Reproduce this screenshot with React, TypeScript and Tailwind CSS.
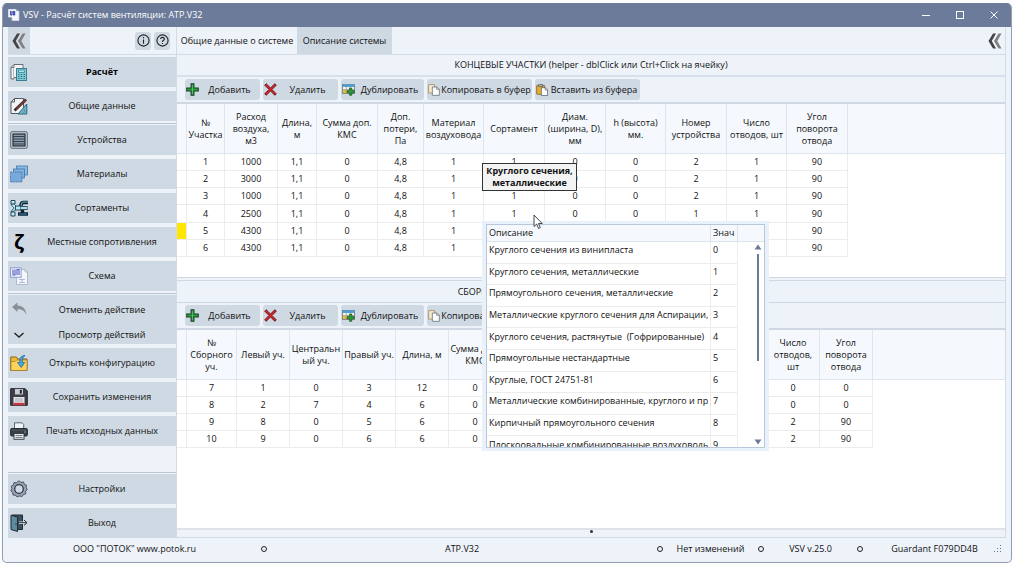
import type { ReactNode } from "react";
import clsx from "clsx";

const Svg = ({ size = "size-[18px]", children }: { size?: string; children: ReactNode }) => (
    <svg viewBox="0 0 18 18" className={clsx(size, "shrink-0")} fill="none" aria-hidden="true">
        {children}
    </svg>
);

const Chevrons = () => (
    <svg viewBox="0 0 14 16" className="h-4 w-[14px]" aria-hidden="true">
        <path d="M5 0.5H8L3.8 8 8 15.5H5L0.5 8z" fill="#444" />
        <path d="M10.5 0.5H13.5L9.3 8 13.5 15.5H10.5L6 8z" fill="#808080" />
    </svg>
);

const CalcIcon = () => (
    <Svg>
        <path d="M1 16V4.500L4 1.500H13V14.500H4V16z" stroke="#5b6068" fill="#f2f4f6" strokeWidth=".9" />
        <path d="M3.500 14V4.500" stroke="#9aa1a8" strokeWidth=".7" />
        <path d="M1 4.500H4V1.500" stroke="#5b6068" strokeWidth=".8" />
        <rect x="6.500" y="5.500" width="10" height="12" fill="#7fcbd6" stroke="#3a7f8e" />
        <rect x="8.500" y="7" width="6" height="2.300" fill="#a9e0e6" stroke="#2f7080" strokeWidth=".6" />
        <path d="M8 11.500h1.500M10.700 11.500h1.500M13.500 11.500H15M8 13.500h1.500M10.700 13.500h1.500M13.500 13.500H15M8 15.500h1.500M10.700 15.500h1.500M13.500 15.500H15" stroke="#2b6472" strokeWidth=".9" />
    </Svg>
);

const DraftIcon = () => (
    <Svg>
        <path d="M4.500 1.500H13.500V16.500H1V5z" fill="#f2f5f7" stroke="#55585c" />
        <path d="M1 5h3.500V1.500" stroke="#55585c" />
        <path d="M16.800 7v10H8z" fill="#6fb9cc" stroke="#2a6478" />
        <path d="M14.500 12.500v2.500h-2.200z" fill="#d9ebf4" stroke="#2a5d7c" strokeWidth=".5" />
        <path d="M4.500 13.500 16 2.500" stroke="#3c2424" strokeWidth="2.800" />
        <path d="M6 12.200 15.500 3" stroke="#8f4038" strokeWidth="1.100" />
    </Svg>
);

const GrilleIcon = () => (
    <Svg>
        <rect x=".8" y=".8" width="16.400" height="16.400" rx="1" fill="#dfe5ec" stroke="#4d5763" />
        <rect x="3" y="3" width="12" height="12" fill="#8c9bac" stroke="#1e2833" strokeWidth="1.200" />
        <path d="M3 5.500h12M3 8h12M3 10.500h12M3 13h12" stroke="#33414f" strokeWidth="1.100" />
    </Svg>
);

const LayersIcon = () => (
    <Svg>
        <rect x="6.500" y="1" width="11" height="9" fill="#8db8e2" stroke="#3f76ad" strokeWidth=".8" />
        <rect x="3.500" y="4" width="11" height="9" fill="#84b1df" stroke="#3f76ad" strokeWidth=".8" />
        <rect x=".5" y="7" width="11.500" height="10" fill="#79a8da" stroke="#3a6ea6" strokeWidth=".8" strokeDasharray="1.500 .7" />
    </Svg>
);

const PipesIcon = () => (
    <Svg>
        <path d="M1 1.500h4v3.500H1zM1 13h4v4H1z" fill="#c4e9f3" stroke="#22495c" />
        <path d="M1 5.500 4 9 1 12.500 3 12.500 7 9.500V8L4 5z" fill="#c4e9f3" stroke="#22495c" strokeWidth=".8" />
        <rect x="5.500" y="7" width="5" height="4" fill="#b5e8f2" stroke="#22495c" />
        <path d="M18 3.500H13.500Q11 3.500 11 7" stroke="#14222c" strokeWidth="3.600" />
        <path d="M18 3.200H13.500Q11.300 3.200 11.300 7" stroke="#4f97ab" strokeWidth="1.300" />
        <path d="M10.500 9H17.500" stroke="#14222c" strokeWidth="4" />
        <path d="M10.500 9H17" stroke="#a3e0ee" strokeWidth="2.400" />
        <path d="M12.500 11v2.500M8 15h10" stroke="#14222c" strokeWidth="3.400" />
        <path d="M9 15h8" stroke="#1f6d9e" strokeWidth="1.300" />
    </Svg>
);

const ZetaIcon = () => (
    <span aria-hidden="true" className="w-[18px] shrink-0 text-center font-['Open_Sans','Noto_Sans',sans-serif] text-[20px] leading-5 font-bold text-black">
        ζ
    </span>
);

const SchemeIcon = () => (
    <Svg>
        <path d="M6.500 2.500h8.500l2.500 2.500v12.500h-11z" fill="#f4f6fb" stroke="#a8aebc" strokeWidth=".8" />
        <path d="M15 2.500V5h2.500" stroke="#a8aebc" strokeWidth=".8" />
        <path d="M9 15.500h6M12 11.500v4M9 12.500h6" stroke="#aebbe0" />
        <rect x=".6" y=".8" width="10.500" height="9.500" fill="#eef1fc" stroke="#8794d0" strokeWidth=".9" />
        <path d="M3 2.500v5.500h2v-5.500M7 8V2.500h2V8" stroke="#5563bd" strokeWidth="1.100" />
    </Svg>
);

const UndoIcon = () => (
    <Svg>
        <path d="M2 6 7.500 1.500V4.500C12.500 4.500 16 8 16.500 14 14.500 9.500 11.500 8 7.500 8.200V11z" fill="#8a9097" />
    </Svg>
);

const DownIcon = () => (
    <Svg>
        <path d="M4.500 7 9 11 13.500 7" stroke="#222" strokeWidth="1.400" />
    </Svg>
);

const FolderIcon = () => (
    <Svg>
        <path d="M.8 16.500V3h5.500l1.500 2H17v11.500z" fill="#f2bb3b" stroke="#7d5a12" strokeWidth=".9" />
        <path d="M1 7.500h4L6.500 6H17v10.500H1z" fill="#fbd35c" stroke="#a47a1b" strokeWidth=".7" />
        <path d="M15 1.500C11 1.500 9.500 4 9.800 8.500H7.500L11.200 13.500 14.700 8.500H12.400C12.200 5 12.800 3 15 1.500z" fill="#4aa6e0" stroke="#1d5e8c" strokeWidth=".7" />
    </Svg>
);

const FloppyIcon = () => (
    <Svg>
        <path d="M.7 .7H15.200L17.300 3V17.300H.7z" fill="#3f3d45" stroke="#24232a" />
        <rect x="5" y="1" width="8" height="5.500" fill="#c8ccd2" />
        <rect x="9.800" y="1.800" width="2" height="3.800" fill="#23252b" />
        <rect x="3.500" y="9" width="11" height="8" fill="#e2e5e9" />
        <rect x="3.500" y="14.800" width="11" height="2.500" fill="#c63844" />
        <path d="M5 11h8M5 13h8" stroke="#8b919a" strokeWidth=".7" />
    </Svg>
);

const PrinterIcon = () => (
    <Svg>
        <path d="M4.500 7V.8h7.500l1.700 1.700V7z" fill="#f2f5f7" stroke="#4d565e" strokeWidth=".9" />
        <rect x=".6" y="6.500" width="16.800" height="7.500" rx="1.200" fill="#3a4047" stroke="#1f2327" strokeWidth=".9" />
        <path d="M1.500 8h15" stroke="#59626b" strokeWidth=".7" />
        <circle cx="15" cy="10" r=".8" fill="#67c0dd" />
        <rect x="4" y="11.500" width="10" height="5.800" fill="#e4e9ed" stroke="#343a40" strokeWidth=".9" />
        <path d="M5.500 13.500h7M5.500 15.500h7" stroke="#59636d" strokeWidth=".8" />
    </Svg>
);

const GearIcon = () => (
    <Svg>
        <path
            d="M9 .8 11 2.500 13.500 1.900 14.300 4.300 16.600 5.300 16.100 7.700 17.300 9.500 15.600 11.300 15.800 13.800 13.400 14.500 12 16.600 9.600 15.900 7.200 17 5.500 15.200 3 15 2.700 12.500 .8 10.900 1.900 8.600 1.200 6.200 3.400 5 4 2.600 6.500 2.700z"
            fill="#99a2b2"
            stroke="#4a5162"
        />
        <circle cx="9" cy="9" r="4.300" fill="#cfd9e4" stroke="#31384a" strokeWidth="1.300" />
    </Svg>
);

const DoorIcon = () => (
    <Svg>
        <path d="M2 1h10.500v14.500H6" fill="#3d4f5c" stroke="#1e2a33" />
        <path d="M1 1.200 7.500 3V17.500L1 15.500z" fill="#5f8ba0" stroke="#1e2a33" />
        <circle cx="6" cy="10" r=".7" fill="#1e2a33" />
        <path d="M9 8.700h7" stroke="#dfe6ea" strokeWidth="2.600" />
        <path d="M9 8.700h7.500M14 6l3 2.700-3 2.700" stroke="#1e2a33" />
    </Svg>
);

const PlusIcon = () => (
    <Svg size="size-[13px]">
        <path d="M7 1h4v6h6v4h-6v6H7v-6H1V7h6z" fill="#27a243" stroke="#1c3a24" strokeWidth="1.400" />
        <path d="M9 3v12" stroke="#63c878" />
    </Svg>
);

const CrossIcon = () => (
    <Svg size="size-[13px]">
        <path d="M3 1 9 7 15 1 17 3 11 9 17 15 15 17 9 11 3 17 1 15 7 9 1 3z" fill="#e0262c" stroke="#571014" strokeWidth="1.300" />
    </Svg>
);

const DuplicateIcon = () => (
    <Svg size="size-[13px]">
        <rect x=".7" y="2" width="16.600" height="12.500" fill="#f7f4e4" stroke="#6d7c88" strokeWidth="1.200" />
        <rect x="1" y="2" width="16" height="3.500" fill="#4f9fd8" />
        <path d="M1 9h16M1 12h16M6 5.500v9M11.500 5.500v9" stroke="#8a9aa5" />
        <rect x="1.500" y="9.500" width="6" height="4.500" fill="#e5b53f" />
        <path d="M10.500 7h3v3.500H17v3h-3.500V17h-3v-3.500H7v-3h3.500z" fill="#2c9e35" stroke="#1b5321" />
    </Svg>
);

const CopyIcon = () => (
    <Svg size="size-3">
        <rect x="1" y="1" width="9" height="12.500" fill="#f4e8cd" stroke="#a58e60" strokeWidth="1.200" />
        <path d="M6.500 4.500H13L17 8V17H6.500z" fill="#fbfbfb" stroke="#667077" strokeWidth="1.200" />
        <path d="M13 4.500V8h4" stroke="#667077" />
    </Svg>
);

const PasteIcon = () => (
    <Svg size="size-3">
        <rect x="1" y="2" width="12" height="13.500" rx="1" fill="#e8ad2e" stroke="#80601c" strokeWidth="1.200" />
        <rect x="4" y="1" width="6" height="3" fill="#a6adb3" stroke="#59626a" />
        <path d="M8 5.500H14L17.300 9V17.300H8z" fill="#fcfcfc" stroke="#5b6770" strokeWidth="1.200" />
        <path d="M13.800 5.500V9h3.500" stroke="#5b6770" />
    </Svg>
);

const AppIcon = () => (
    <Svg size="size-3">
        <path d="M6 3h10.500v14.500H6z" fill="#f3f5fb" stroke="#c9d2ea" />
        <rect x="1" y="1" width="11" height="11" fill="#e8ecfb" stroke="#fff" />
        <path d="M4 3v6h2V3M8 3v6h2V3" stroke="#2b3ca6" strokeWidth="1.500" />
    </Svg>
);

type Item = { label: string; icon: () => ReactNode; bold?: boolean; short?: boolean };

const groups: Item[][] = [
    [
        { label: "Расчёт", icon: CalcIcon, bold: true },
        { label: "Общие данные", icon: DraftIcon },
    ],
    [
        { label: "Устройства", icon: GrilleIcon },
        { label: "Материалы", icon: LayersIcon },
        { label: "Сортаменты", icon: PipesIcon },
        { label: "Местные сопротивления", icon: ZetaIcon },
        { label: "Схема", icon: SchemeIcon },
    ],
];

const fileItems: Item[] = [
    { label: "Открыть конфигурацию", icon: FolderIcon },
    { label: "Сохранить изменения", icon: FloppyIcon },
    { label: "Печать исходных данных", icon: PrinterIcon },
];

const appItems: Item[] = [
    { label: "Настройки", icon: GearIcon },
    { label: "Выход", icon: DoorIcon },
];

const SideButton = ({ label, icon: Icon, bold, short }: Item) => (
    <button className={clsx("flex w-full items-center bg-[#cfd9e3] pl-[2px]", short ? "h-[19px]" : "h-[30px]", bold && "font-bold text-black")}>
        <Icon />
        <span className="flex-1 text-center">{label}</span>
    </button>
);

const Separator = () => (
    <div className="flex h-1 items-center">
        <div className="h-px w-full bg-[#bcc5cf]" />
    </div>
);

const Toolbar = () => (
    <div className="flex h-[27px] gap-[3px] border-b-2 border-[#d0d9e3] py-[2px] pl-2">
        {[
            { label: "Добавить", icon: PlusIcon, width: "w-[75px]" },
            { label: "Удалить", icon: CrossIcon, width: "w-[75px]" },
            { label: "Дублировать", icon: DuplicateIcon, width: "w-[83px]" },
            { label: "Копировать в буфер", icon: CopyIcon, width: "w-[105px]" },
            { label: "Вставить из буфера", icon: PasteIcon, width: "w-[105px]" },
        ].map(({ label, icon: Icon, width }) => (
            <button key={label} className={clsx("flex items-center rounded-[3px] bg-[#cfd9e3] pl-px whitespace-nowrap", width)}>
                <Icon />
                <span className="flex-1 text-center">{label}</span>
            </button>
        ))}
    </div>
);

type Column = { title: string; width: string };

const endColumns: Column[] = [
    { title: "№\nУчастка", width: "w-[38px]" },
    { title: "Расход\nвоздуха,\nм3", width: "w-[53px]" },
    { title: "Длина,\nм", width: "w-[39px]" },
    { title: "Сумма доп.\nКМС", width: "w-[61px]" },
    { title: "Доп.\nпотери,\nПа", width: "w-[46px]" },
    { title: "Материал\nвоздуховода", width: "w-[60px]" },
    { title: "Сортамент", width: "w-[61px]" },
    { title: "Диам.\n(ширина, D),\nмм", width: "w-[61px]" },
    { title: "h (высота)\nмм.", width: "w-[60px]" },
    { title: "Номер\nустройства", width: "w-[61px]" },
    { title: "Число\nотводов, шт", width: "w-[60px]" },
    { title: "Угол\nповорота\nотвода", width: "w-[61px]" },
];

const endRows = [
    ["1", "1000", "1,1", "0", "4,8", "1", "1", "0", "0", "2", "1", "90"],
    ["2", "3000", "1,1", "0", "4,8", "1", "1", "0", "0", "2", "1", "90"],
    ["3", "1000", "1,1", "0", "4,8", "1", "1", "0", "0", "2", "1", "90"],
    ["4", "2500", "1,1", "0", "4,8", "1", "1", "0", "0", "1", "1", "90"],
    ["5", "4300", "1,1", "0", "4,8", "1", "1", "0", "0", "1", "1", "90"],
    ["6", "4300", "1,1", "0", "4,8", "1", "1", "0", "0", "1", "1", "90"],
];

const mergeColumns: Column[] = [
    { title: "№\nСборного\nуч.", width: "w-[50px]" },
    { title: "Левый уч.", width: "w-[53px]" },
    { title: "Центральн\nый уч.", width: "w-[53px]" },
    { title: "Правый уч.", width: "w-[53px]" },
    { title: "Длина, м", width: "w-[53px]" },
    { title: "Сумма доп.\nКМС", width: "w-[53px]" },
    { title: "Доп.\nпотери, Па", width: "w-[53px]" },
    { title: "Материал", width: "w-[53px]" },
    { title: "Сортамент", width: "w-[53px]" },
    { title: "Диам.,\nмм", width: "w-[53px]" },
    { title: "h (высота)\nмм.", width: "w-[53px]" },
    { title: "Число\nотводов,\nшт", width: "w-[53px]" },
    { title: "Угол\nповорота\nотвода", width: "w-[53px]" },
];

const mergeRows = [
    ["7", "1", "0", "3", "12", "0", "0", "1", "1", "0", "0", "0", "0"],
    ["8", "2", "7", "4", "6", "0", "0", "1", "1", "0", "0", "0", "0"],
    ["9", "8", "0", "5", "6", "0", "0", "1", "1", "0", "0", "2", "90"],
    ["10", "9", "0", "6", "6", "0", "0", "1", "1", "0", "0", "2", "90"],
];

const DataTable = ({ label, columns, rows, height, selected }: { label: string; columns: Column[]; rows: string[][]; height: string; selected?: number }) => (
    <table aria-label={label} className={clsx("w-full table-fixed border-separate border-spacing-0 text-center", height)}>
        <colgroup>
            <col className="w-[10px]" />
            {columns.map((c, i) => (
                <col key={i} className={c.width} />
            ))}
            <col />
        </colgroup>
        <thead className="bg-[#f5f9fd]">
            <tr className="h-[50px]">
                <th className="border-r border-b border-[#dde5ee]" />
                {columns.map((c) => (
                    <th key={c.title} className="border-r border-b border-[#dde5ee] p-0 leading-3 font-normal whitespace-pre">
                        {c.title}
                    </th>
                ))}
                <th className="border-b border-[#dde5ee]" />
            </tr>
        </thead>
        <tbody>
            {rows.map((row, i) => (
                <tr key={i}>
                    <td className={clsx("border-r border-b border-[#ececec]", i === selected && "bg-[#ffe600]")} />
                    {row.map((value, j) => (
                        <td key={j} className="border-r border-b border-[#ececec] p-0 leading-4">
                            {value}
                        </td>
                    ))}
                    <td />
                </tr>
            ))}
        </tbody>
    </table>
);

const sections = [
    "Круглого сечения из винипласта",
    "Круглого сечения, металлические",
    "Прямоугольного сечения, металлические",
    "Металлические круглого сечения для Аспирации, Пневмо",
    "Круглого сечения, растянутые  (Гофрированные)",
    "Прямоугольные нестандартные",
    "Круглые, ГОСТ 24751-81",
    "Металлические комбинированные, круглого и прямоугольного",
    "Кирпичный прямоугольного сечения",
    "Плоскоовальные комбинированные воздуховоды из стали",
];

const SectionPicker = () => (
    <div className="absolute top-[194px] left-[305px] w-[287px] bg-[#e9f1fa] px-1 py-[3px]">
        <div className="relative h-[224px] overflow-hidden border border-[#b9c7da] bg-white">
            <table className="h-[233px] w-full table-fixed border-separate border-spacing-0 text-left">
                <colgroup>
                    <col />
                    <col className="w-[27px]" />
                    <col className="w-[26px]" />
                </colgroup>
                <thead className="bg-[#f5f9fd]">
                    <tr className="h-[17px]">
                        <th className="border-r border-b border-[#dbe4ee] p-0 pl-[2px] font-normal">Описание</th>
                        <th className="border-r border-b border-[#dbe4ee] p-0 pl-[2px] font-normal">Знач</th>
                        <th className="border-b border-[#dbe4ee]" />
                    </tr>
                </thead>
                <tbody>
                    {sections.map((name, i) => (
                        <tr key={name}>
                            <td className="overflow-hidden border-r border-b border-[#ececec] pt-0 pr-[2px] pb-1 pl-[2px]">
                                <div className="overflow-hidden whitespace-pre">{name}</div>
                            </td>
                            <td className="border-r border-b border-[#ececec] p-0 pb-1 pl-[2px]">{i}</td>
                            <td />
                        </tr>
                    ))}
                </tbody>
            </table>
            <div className="absolute top-[19px] right-[2px] bottom-[2px] flex w-2 flex-col items-center">
                <svg viewBox="0 0 8 6" className="h-[6px] w-2" aria-hidden="true">
                    <path d="M4 .5 7.500 5.500H.5z" fill="#6b7b9b" />
                </svg>
                <div className="mt-1 h-[107px] w-[2px] bg-[#6b7b9b]" />
                <svg viewBox="0 0 8 6" className="mt-auto h-[6px] w-2" aria-hidden="true">
                    <path d="M4 5.500 7.500 .5H.5z" fill="#6b7b9b" />
                </svg>
            </div>
        </div>
    </div>
);

const Dot = () => <span className="size-[6px] shrink-0 rounded-full border border-[#222]" />;

export default function App() {
    return (
        <div className="flex min-h-screen bg-[#fdfdfd] pt-[3px] pr-[3px] pb-[3px] pl-[2px] font-['Open_Sans','Noto_Sans',sans-serif] text-[9px] leading-3 text-[#111]">
            <div className="flex w-full flex-col overflow-hidden rounded-[5px] border border-t-0 border-[#8f9db5] bg-[#eef3fa]">
                <header className="flex h-6 items-center bg-[#6b7b99] pl-[5px] text-white">
                    <AppIcon />
                    <h1 className="ml-[3px] flex-1">VSV - Расчёт систем вентиляции: ATP.V32</h1>
                    <button aria-label="Свернуть" className="flex h-6 w-[34px] items-center justify-center">
                        <span className="h-px w-2 bg-white" />
                    </button>
                    <button aria-label="Развернуть" className="flex h-6 w-[34px] items-center justify-center">
                        <span className="size-2 border border-white" />
                    </button>
                    <button aria-label="Закрыть" className="flex h-6 w-[34px] items-center justify-center">
                        <svg viewBox="0 0 8 8" className="size-2" stroke="#fff" aria-hidden="true">
                            <path d="M.5 .5 7.500 7.500M7.500 .5 .5 7.500" />
                        </svg>
                    </button>
                </header>

                <div className="flex flex-1 pr-[5px] pl-[5px]">
                    <nav className="flex w-[169px] shrink-0 flex-col border-r border-[#d3dce6]">
                        <div className="mb-[2px] flex h-7 items-center gap-[3px] border-b border-[#d3dce6] pr-[6px]">
                            <button aria-label="Скрыть меню" className="mr-auto flex h-[27px] w-[22px] items-center justify-center bg-[#cfd9e3]">
                                <Chevrons />
                            </button>
                            <button aria-label="О программе" className="flex h-[18px] w-4 items-center justify-center rounded-[3px] bg-[#cfd9e3]">
                                <svg viewBox="0 0 14 14" className="size-[13px]" fill="none" stroke="#222" aria-hidden="true">
                                    <circle cx="7" cy="7" r="6" strokeWidth="1.200" />
                                    <path d="M7 6v4.500M7 3.300v1.400" strokeWidth="1.200" />
                                </svg>
                            </button>
                            <button aria-label="Справка" className="flex h-[18px] w-4 items-center justify-center rounded-[3px] bg-[#cfd9e3]">
                                <svg viewBox="0 0 14 14" className="size-[13px]" fill="none" stroke="#222" aria-hidden="true">
                                    <circle cx="7" cy="7" r="6" strokeWidth="1.200" />
                                    <path d="M5 5.300C5 3 9 3 9 5.300 9 6.800 7 6.800 7 8.500M7 9.600v1.300" strokeWidth="1.200" />
                                </svg>
                            </button>
                        </div>
                        {groups.map((items, i) => (
                            <div key={i}>
                                <div className="flex flex-col gap-1">
                                    {items.map((item) => (
                                        <SideButton key={item.label} {...item} />
                                    ))}
                                </div>
                                <Separator />
                            </div>
                        ))}
                        <SideButton label="Отменить действие" icon={UndoIcon} />
                        <SideButton label="Просмотр действий" icon={DownIcon} short />
                        <div className="mt-1 flex flex-col gap-1">
                            {fileItems.map((item) => (
                                <SideButton key={item.label} {...item} />
                            ))}
                        </div>
                        <div className="mt-auto">
                            <Separator />
                            <div className="flex flex-col gap-1">
                                {appItems.map((item) => (
                                    <SideButton key={item.label} {...item} />
                                ))}
                            </div>
                        </div>
                    </nav>

                    <main className="relative flex min-w-0 flex-1 flex-col border-r border-[#d3dce6]">
                        <div className="flex h-7 border-b border-[#d3dce6] whitespace-nowrap">
                            <button className="w-[120px]">Общие данные о системе</button>
                            <button className="w-[95px] bg-[#cfd9e3]">Описание системы</button>
                            <button aria-label="Скрыть панель" className="mr-[3px] ml-auto">
                                <Chevrons />
                            </button>
                        </div>

                        <section className="flex h-[222px] shrink-0 flex-col">
                            <h2 className="flex h-[22px] items-center justify-center border-b-2 border-[#d8e1eb]">
                                КОНЦЕВЫЕ УЧАСТКИ (helper - dblClick или Ctrl+Click на ячейку)
                            </h2>
                            <Toolbar />
                            <div className="flex-1 bg-white">
                                <DataTable label="Концевые участки" columns={endColumns} rows={endRows} height="h-[153px]" selected={4} />
                            </div>
                        </section>

                        <div className="h-1 border-y border-[#d0d9e3]" />

                        <section className="flex flex-1 flex-col">
                            <h2 className="flex h-[22px] items-center justify-center border-b border-[#d0d9e3]">СБОРНЫЕ УЧАСТКИ (helper - dblClick или Ctrl+Click на ячейку)</h2>
                            <Toolbar />
                            <div className="flex-1 bg-white">
                                <DataTable label="Сборные участки" columns={mergeColumns} rows={mergeRows} height="h-[118px]" />
                            </div>
                        </section>
                        <div className="flex h-[10px] justify-center border-t-2 border-b border-t-[#dfe3e8] border-b-[#d3dce6]">
                            <span className="size-[3px] rounded-full bg-[#333]" />
                        </div>

                        <SectionPicker />
                        <div role="tooltip" className="absolute top-[136px] left-[305px] w-[95px] border border-[#333] bg-[#f3f3f3] py-[1px] text-center font-bold whitespace-pre">
                            {"Круглого сечения,\nметаллические"}
                        </div>
                        <svg viewBox="0 0 10 16" className="absolute top-[187px] left-[356px] h-4 w-[10px]" aria-hidden="true">
                            <path d="M1 1V12.500L3.700 10 5.500 14.500 7.300 13.700 5.500 9.500H9.200z" fill="#fff" stroke="#333" strokeWidth=".9" />
                        </svg>
                    </main>
                </div>

                <footer className="flex h-6 items-center pr-[5px] pb-[2px] pl-[5px] text-center">
                    <a href="#" className="w-[253px]">
                        ООО "ПОТОК" www.potok.ru
                    </a>
                    <Dot />
                    <span className="flex-1">ATP.V32</span>
                    <Dot />
                    <span className="w-[95px]">Нет изменений</span>
                    <Dot />
                    <span className="w-[93px]">VSV v.25.0</span>
                    <Dot />
                    <span className="w-[131px] pl-3">Guardant F079DD4B</span>
                    <svg viewBox="0 0 8 8" className="mr-1 size-2" fill="#66758f" aria-hidden="true">
                        <path d="M6 0h1v1H6zM3 3h1v1H3zM6 3h1v1H6zM0 6h1v1H0zM3 6h1v1H3zM6 6h1v1H6z" />
                    </svg>
                </footer>
            </div>
        </div>
    );
}
